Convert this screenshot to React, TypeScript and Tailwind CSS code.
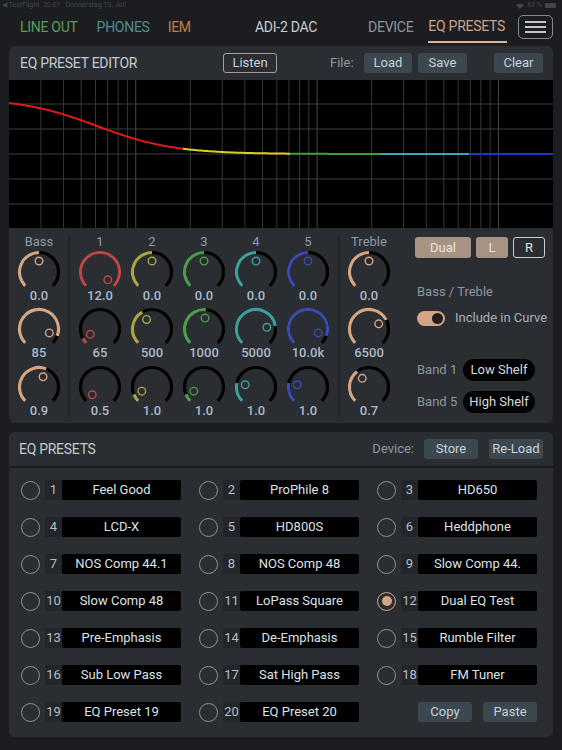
import React from 'react'

const HEAD = "font-['Roboto',sans-serif] text-[14px] tracking-[-0.02em]"

const TAN = '#d4a585'
const knobCols = [
  { label: 'Bass', color: TAN, vals: ['0.0', '85', '0.9'], pos: [0.5, 0.91, 0.58] },
  { label: '1', color: '#b8494b', vals: ['12.0', '65', '0.5'], pos: [1, 0.06, 0] },
  { label: '2', color: '#a9a444', vals: ['0.0', '500', '1.0'], pos: [0.5, 0.39, 0.085] },
  { label: '3', color: '#4d9c4a', vals: ['0.0', '1000', '1.0'], pos: [0.5, 0.52, 0.085] },
  { label: '4', color: '#3f9d9c', vals: ['0.0', '5000', '1.0'], pos: [0.5, 0.8, 0.21] },
  { label: '5', color: '#3a4cae', vals: ['0.0', '10.0k', '1.0'], pos: [0.5, 0.91, 0.21] },
  { label: 'Treble', color: TAN, vals: ['0.0', '6500', '0.7'], pos: [0.5, 0.73, 0.36] },
]

const presets = [
  'Feel Good', 'ProPhile 8', 'HD650', 'LCD-X', 'HD800S', 'Heddphone',
  'NOS Comp 44.1', 'NOS Comp 48', 'Slow Comp 44.', 'Slow Comp 48', 'LoPass Square', 'Dual EQ Test',
  'Pre-Emphasis', 'De-Emphasis', 'Rumble Filter', 'Sub Low Pass', 'Sat High Pass', 'FM Tuner',
  'EQ Preset 19', 'EQ Preset 20',
]

function Knob({ v, color }: { v: number; color: string }) {
  const cx = 22, cy = 22, r = 19.5
  const pt = (deg: number, rad: number) => {
    const a = (deg * Math.PI) / 180
    return [cx + rad * Math.sin(a), cy - rad * Math.cos(a)]
  }
  const arc = (a: number, b: number) => {
    const [x1, y1] = pt(a, r)
    const [x2, y2] = pt(b, r)
    return `M${x1} ${y1} A${r} ${r} 0 ${b - a > 180 ? 1 : 0} 1 ${x2} ${y2}`
  }
  const end = -135 + 270 * v
  const [ix, iy] = pt(end, 11)
  return (
    <svg width="44" height="38" viewBox="0 0 44 38">
      <path d={arc(-135, 135)} fill="none" stroke="#000" strokeWidth="3.2" />
      {v > 0.01 && <path d={arc(-135, end)} fill="none" stroke={color} strokeWidth="3.2" />}
      <circle cx={ix} cy={iy} r="3.8" fill="none" stroke={color} strokeWidth="1.4" />
    </svg>
  )
}

function Graph() {
  const W = 544, H = 148
  const fx = (f: number) => (W * Math.log10(f / 20)) / 3
  const freqs: number[] = []
  for (const d of [10, 100, 1000]) for (let m = 1; m <= 9; m++) { const f = d * m; if (f > 20) freqs.push(f) }
  freqs.push(10000)
  const y = (x: number) => 74 - 56 / (1 + Math.exp((x - 88) / 38))
  const segs: [number, number, string][] = [
    [0, 174, '#e01a1a'], [174, 281, '#dccf22'], [281, 371, '#36a336'], [371, 460, '#38a7ae'], [460, 544, '#1f36c4'],
  ]
  const line = (a: number, b: number) => {
    const p: string[] = []
    for (let x = a; x <= b; x += 2) p.push(`${x},${y(x).toFixed(2)}`)
    p.push(`${b},${y(b).toFixed(2)}`)
    return p.join(' ')
  }
  return (
    <svg width={W} height={H} className="block bg-black">
      {freqs.map(f => (
        <line key={f} x1={fx(f)} x2={fx(f)} y1="0" y2={H} stroke={[100, 1000, 10000].includes(f) ? '#4a4a4a' : '#363636'} strokeWidth="1" />
      ))}
      {[24, 49, 74, 99, 124].map(v => (
        <line key={v} x1="0" x2={W} y1={v} y2={v} stroke="#3e3e3e" strokeWidth="1" />
      ))}
      {segs.map(([a, b, c]) => (
        <polyline key={a} points={line(a, b)} fill="none" stroke={c} strokeWidth="2" />
      ))}
    </svg>
  )
}

function Btn({ children, w }: { children: React.ReactNode; w: string }) {
  return <div className={`${w} h-[20px] rounded-[3px] bg-[#3d4750] text-[#c9d1d9] text-[13px] flex items-center justify-center`}>{children}</div>
}

function Radio({ on }: { on?: boolean }) {
  return (
    <div className={`w-[19px] h-[19px] rounded-full border-[1.5px] flex items-center justify-center shrink-0 ${on ? 'border-[#d4a585]' : 'border-[#8c9299]'}`}>
      {on && <div className="w-[10px] h-[10px] rounded-full bg-[#d4a585]" />}
    </div>
  )
}

export default function App() {
  return (
    <div className="w-[562px] h-[750px] bg-[#1c1d20] font-['Roboto',sans-serif] overflow-hidden">
      {/* status bar */}
      <div className="h-[11px] flex items-center justify-between px-[2px] text-[7px] text-[#44464a]">
        <span>◀ TestFlight&nbsp;&nbsp;20:07&nbsp;&nbsp;&nbsp;Donnerstag 13. Juli</span>
        <span className="flex items-center gap-[3px] pr-[4px]">
          <svg width="8" height="6" viewBox="0 0 8 6"><path d="M0 2 Q4 -1 8 2 L4 6Z" fill="#44464a" /></svg>
          62 %
          <span className="w-[11px] h-[5px] bg-[#44464a] rounded-[1px]" />
        </span>
      </div>

      {/* nav */}
      <div className={`h-[32px] flex items-center ${HEAD}`}>
        <div className="w-[255px] shrink-0 flex items-center pl-[20px]">
          <span className="text-[#5c9d59]">LINE OUT</span>
          <span className="ml-[19px] text-[#4d8e93]">PHONES</span>
          <span className="ml-[18px] text-[#c67b45]">IEM</span>
        </div>
        <span className="text-[#c9cdd1] whitespace-nowrap">ADI-2 DAC</span>
        <div className="flex-1 h-full flex items-center justify-end">
          <span className="text-[#8c949c]">DEVICE</span>
          <span className="ml-[15px] h-full flex items-center pr-[2px] border-b-2 border-[#d8b59a] text-[#cba389]">EQ PRESETS</span>
          <div className="ml-[11px] mr-[9px] w-[35px] h-[24px] rounded-[5px] border-[1.5px] border-[#85888c] flex flex-col items-center justify-center gap-[3.5px]">
            <div className="w-[21px] h-[1.5px] bg-[#c2c4c6]" />
            <div className="w-[21px] h-[1.5px] bg-[#c2c4c6]" />
            <div className="w-[21px] h-[1.5px] bg-[#c2c4c6]" />
          </div>
        </div>
      </div>

      {/* EQ preset editor */}
      <div className="mx-[9px] mt-[3px] rounded-[6px] bg-[#2a2d31] overflow-hidden">
        <div className="h-[34px] flex items-center pl-[11px] pr-[10px]">
          <span className={`${HEAD} text-[#c3cad2]`}>EQ PRESET EDITOR</span>
          <div className="ml-auto w-[54px] h-[20px] rounded-[3px] border-[1.5px] border-[#a69d95] text-[13px] text-[#c9d1d9] flex items-center justify-center">Listen</div>
          <span className="ml-[53px] w-[26px] text-[13px] text-[#8f98a1]">File:</span>
          <div className="ml-[8px]"><Btn w="w-[48px]">Load</Btn></div>
          <div className="ml-[6px]"><Btn w="w-[49px]">Save</Btn></div>
          <div className="ml-[27px]"><Btn w="w-[49px]">Clear</Btn></div>
        </div>
        <Graph />
        <div className="flex pt-[6px] pb-[4px]">
          {knobCols.map((c, i) => (
            <React.Fragment key={c.label}>
              {(i === 1 || i === 6) && <div className="w-[2px] bg-[#202327] my-[2px] mx-[4px]" />}
              <div className={`${i === 0 || i === 6 ? 'w-[50px]' : 'w-[52px]'} ${i === 0 ? 'ml-[5px]' : ''} flex flex-col items-center`}>
                <div className="h-[16px] leading-[16px] text-[13px] text-[#8d9bab]">{c.label}</div>
                {c.vals.map((v, j) => (
                  <div key={j} className={`flex flex-col items-center ${j === 1 ? 'mt-[3px]' : j === 2 ? 'mt-[4px]' : ''}`}>
                    <Knob v={c.pos[j]} color={c.color} />
                    <div className="h-[16px] leading-[16px] text-[13px] font-medium text-[#a9bacb]">{v}</div>
                  </div>
                ))}
              </div>
            </React.Fragment>
          ))}
          <div className="ml-[21px] pt-[3px] flex flex-col">
            <div className="flex gap-[5px]">
              <div className="w-[56px] h-[21px] rounded-[3px] bg-[#a79383] text-[13px] text-[#ebe5df] flex items-center justify-center">Dual</div>
              <div className="w-[32px] h-[21px] rounded-[3px] bg-[#a79383] text-[13px] text-[#ebe5df] flex items-center justify-center">L</div>
              <div className="w-[32px] h-[21px] rounded-[3px] border-[1.5px] border-[#c9cbcd] text-[13px] text-[#dfe3e7] flex items-center justify-center">R</div>
            </div>
            <div className="mt-[26px] ml-[2px] h-[16px] leading-[16px] text-[13px] text-[#8d969f]">Bass / Treble</div>
            <div className="mt-[10px] ml-[2px] h-[16px] flex items-center">
              <div className="w-[28px] h-[15px] rounded-full bg-[#d4a585] flex items-center justify-end pr-[2px]">
                <div className="w-[11px] h-[11px] rounded-full bg-[#1f1f1f]" />
              </div>
              <span className="ml-[10px] text-[13px] text-[#a9b1b9]">Include in Curve</span>
            </div>
            {['Band 1|Low Shelf', 'Band 5|High Shelf'].map((s, k) => {
              const [a, b] = s.split('|')
              return (
                <div key={a} className={`${k === 0 ? 'mt-[33px]' : 'mt-[10px]'} ml-[2px] h-[22px] flex items-center`}>
                  <span className="w-[46px] text-[13px] text-[#8d969f]">{a}</span>
                  <div className="w-[72px] h-[22px] rounded-full bg-black text-[13px] text-[#d6dadf] flex items-center justify-center">{b}</div>
                </div>
              )
            })}
          </div>
        </div>
      </div>

      {/* EQ presets */}
      <div className="mx-[9px] mt-[9px] rounded-[6px] bg-[#2a2d31]">
        <div className="h-[36px] flex items-center pl-[10px] pr-[10px] border-b-2 border-[#1b1d20]">
          <span className={`${HEAD} text-[#c3cad2]`}>EQ PRESETS</span>
          <span className="ml-auto text-[13px] text-[#8f98a1]">Device:</span>
          <div className="ml-[10px]"><Btn w="w-[54px]">Store</Btn></div>
          <div className="ml-[11px]"><Btn w="w-[54px]">Re-Load</Btn></div>
        </div>
        <div className="grid grid-cols-[160px_160px_160px] gap-x-[18px] gap-y-[17px] pl-[12px] pt-[12px] pb-[15px]">
          {presets.map((p, i) => (
            <div key={p} className="flex items-center h-[20px]">
              <Radio on={i === 11} />
              <div className="ml-[5px] w-[17px] h-[20px] bg-[#222529] text-[13px] text-[#b6bec6] flex items-center justify-center">{i + 1}</div>
              <div className="w-[119px] h-[20px] bg-black rounded-[2px] text-[13px] text-[#dde2e7] flex items-center justify-center whitespace-nowrap overflow-hidden">{p}</div>
            </div>
          ))}
          <div className="flex items-center justify-end gap-[11px] h-[20px]">
            <Btn w="w-[54px]">Copy</Btn>
            <Btn w="w-[54px]">Paste</Btn>
          </div>
        </div>
      </div>
    </div>
  )
}
